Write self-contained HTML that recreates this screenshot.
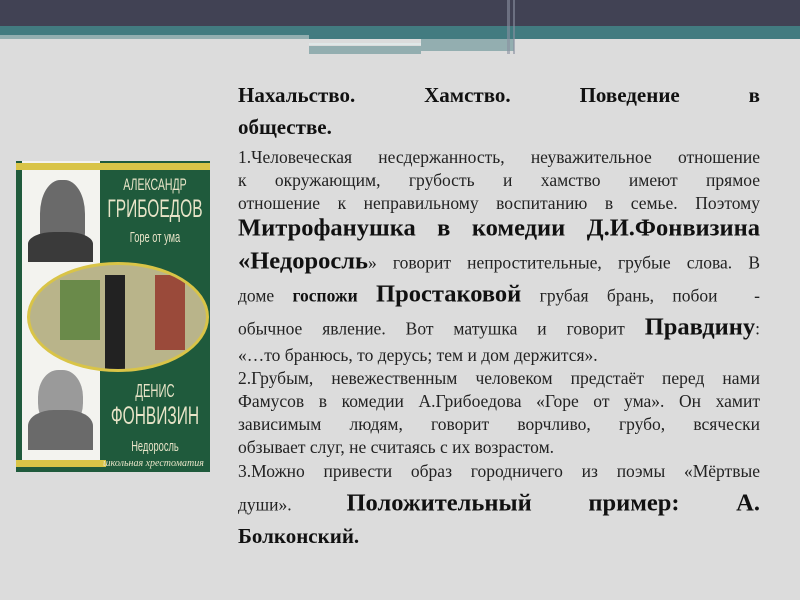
<!DOCTYPE html>
<html><head><meta charset="utf-8"><style>
body{margin:0;width:800px;height:600px;background:#dcdcdc;position:relative;overflow:hidden;font-family:"Liberation Serif","DejaVu Serif",serif;color:#222}
.l{position:absolute;left:238px;width:522px;white-space:nowrap;text-align:justify;text-align-last:justify;font-size:17.5px;line-height:22px;transform:translateY(-50%)}
.n{text-align-last:left}
.h{font-size:21px;font-weight:bold;color:#111}
b{color:#111}
.big{font-size:24.5px}
.bk{color:#e8e4c8;font-family:'Liberation Sans',sans-serif;line-height:1;position:absolute;left:101px;width:108px;text-align:center}
.bk div{transform:scaleX(.62);white-space:nowrap;width:200px;margin-left:-46px}
</style></head><body>
<div style="position:absolute;left:0;top:0;width:800px;height:26px;background:#414254"></div>
<div style="position:absolute;left:0;top:26px;width:800px;height:13px;background:#427b80"></div>
<div style="position:absolute;left:0;top:35px;width:309px;height:4px;background:#93aeb0"></div>
<div style="position:absolute;left:309px;top:43px;width:175px;height:2px;background:#e0e8e8"></div>
<div style="position:absolute;left:309px;top:46px;width:112px;height:8px;background:#93aeb0"></div>
<div style="position:absolute;left:421px;top:39px;width:93px;height:12px;background:#93aeb0"></div>
<div style="position:absolute;left:507px;top:0;width:3px;height:54px;background:#8890a0;opacity:.6"></div>
<div style="position:absolute;left:513px;top:0;width:2px;height:54px;background:#8890a0;opacity:.6"></div>

<div style="position:absolute;left:16px;top:161px;width:194px;height:311px;background:#1f5a3c"></div>
<div style="position:absolute;left:22px;top:161px;width:78px;height:305px;background:#f3f3ef"></div>
<div style="position:absolute;left:16px;top:163px;width:194px;height:7px;background:#d9c447"></div>
<div style="position:absolute;left:16px;top:460px;width:90px;height:7px;background:#d9c447"></div>
<div style="position:absolute;left:40px;top:180px;width:45px;height:75px;border-radius:45% 45% 30% 30%;background:#6a6a6a"></div>
<div style="position:absolute;left:28px;top:232px;width:65px;height:30px;border-radius:40% 40% 0 0;background:#3a3a3a"></div>
<div style="position:absolute;left:38px;top:370px;width:45px;height:60px;border-radius:45%;background:#9a9a9a"></div>
<div style="position:absolute;left:28px;top:410px;width:65px;height:40px;border-radius:40% 40% 0 0;background:#6a6a6a"></div>
<div style="position:absolute;left:27px;top:262px;width:182px;height:110px;border-radius:50%;background:#b9b48a;border:3px solid #d9c447;box-sizing:border-box;overflow:hidden">
 <div style="position:absolute;left:30px;top:15px;width:40px;height:60px;background:#6a8a4a"></div>
 <div style="position:absolute;left:75px;top:10px;width:20px;height:95px;background:#222"></div>
 <div style="position:absolute;left:125px;top:10px;width:30px;height:75px;background:#9a4a3a"></div>
</div>
<div class="bk" style="top:176px">
 <div style="font-size:17px">АЛЕКСАНДР</div><div style="font-size:25px;margin-top:4px">ГРИБОЕДОВ</div><div style="font-size:15px;margin-top:8px">Горе от ума</div>
</div>
<div class="bk" style="top:382px">
 <div style="font-size:18px">ДЕНИС</div><div style="font-size:25px;margin-top:4px">ФОНВИЗИН</div><div style="font-size:15px;margin-top:10px">Недоросль</div>
</div>
<div style="position:absolute;left:103px;top:458px;width:107px;font-size:10px;font-style:italic;color:#e8e4c8;white-space:nowrap;overflow:hidden">школьная хрестоматия</div>

<div class="l h" style="top:95px">Нахальство. Хамство. Поведение в</div>
<div class="l h n" style="top:127px">обществе.</div>
<div class="l" style="top:157px">1.Человеческая несдержанность, неуважительное отношение</div>
<div class="l" style="top:180px">к окружающим, грубость и хамство имеют прямое</div>
<div class="l" style="top:203px">отношение к неправильному воспитанию в семье. Поэтому</div>
<div class="l" style="top:229px"><b class="big">Митрофанушка в комедии Д.И.Фонвизина</b></div>
<div class="l" style="top:262px"><b class="big">«Недоросль</b>» говорит непростительные, грубые слова. В</div>
<div class="l" style="top:295px">доме <b>госпожи</b> <b class="big">Простаковой</b> грубая брань, побои &nbsp;-</div>
<div class="l" style="top:328px">обычное явление. Вот матушка и говорит <b class="big">Правдину</b>:</div>
<div class="l n" style="top:355px">«…то бранюсь, то дерусь; тем и дом держится».</div>
<div class="l" style="top:378px">2.Грубым, невежественным человеком предстаёт перед нами</div>
<div class="l" style="top:401px">Фамусов в комедии А.Грибоедова «Горе от ума». Он хамит</div>
<div class="l" style="top:424px">зависимым людям, говорит ворчливо, грубо, всячески</div>
<div class="l n" style="top:447px">обзывает слуг, не считаясь с их возрастом.</div>
<div class="l" style="top:471px">3.Можно привести образ городничего из поэмы «Мёртвые</div>
<div class="l" style="top:504px">души». <b class="big">Положительный пример: А.</b></div>
<div class="l h n" style="top:536px">Болконский.</div>
</body></html>
